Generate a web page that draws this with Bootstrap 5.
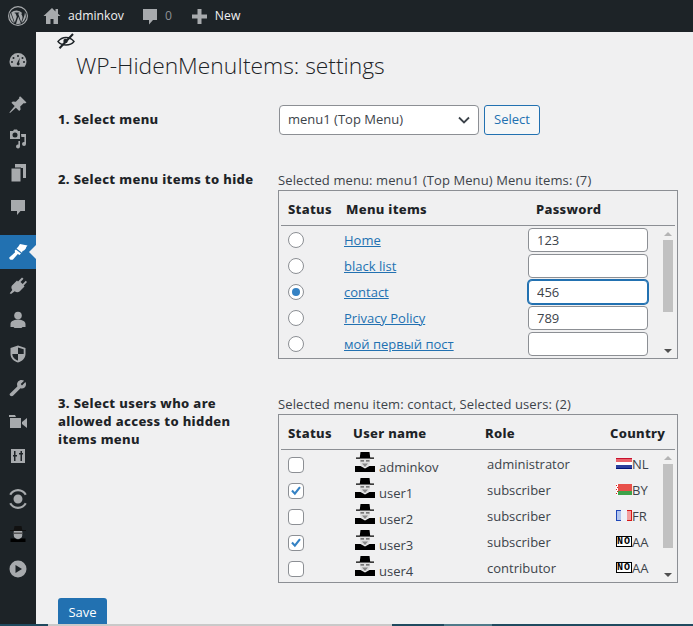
<!DOCTYPE html>
<html lang="en">
<head>
<meta charset="utf-8">
<title>WP-HidenMenuItems</title>
<link href="https://cdn.jsdelivr.net/npm/bootstrap@5.3.0/dist/css/bootstrap.min.css" rel="stylesheet">
<style>
html,body{height:626px;overflow:hidden}
body{background:#f0f0f1;font-family:"Open Sans","Liberation Sans",sans-serif;font-size:13px;color:#3c434a;width:693px}
.wbar{height:32px;background:#1d2327;color:#f0f0f1;flex:none;font-size:12.2px}
.wbar svg{fill:#a7aaad;display:block}
.wbar .muted-num{color:#8c8f94}
.wshell{height:592px;overflow:hidden}
.wside{width:36px;background:#1d2327;flex:none;padding-top:11px}
.wside .ico{height:34px;display:flex;align-items:center;justify-content:center;position:relative}
.wside .ico svg{width:20px;height:20px;fill:#a7aaad;display:block}
.wside .sep{height:11px}
.wside .sep2{height:9px}
.wside .sep3{height:1px}
.wside .act{background:#2271b1}
.wside .act svg{fill:#fff}
.wside .act::after{content:"";position:absolute;right:0;top:10px;border:7px solid transparent;border-right-color:#f0f0f1;border-left:0}
.wmain{padding-left:22px;flex:1;min-width:0}
.eyeico{display:block;width:18px;height:16px;margin-top:1px;margin-left:-1px}
.wtitle{font-size:22.8px;font-weight:300;color:#1d2327;margin:2px 0 0 18px;line-height:30px}
.lblcol{width:220px;flex:none;font-family:"Noto Sans","Open Sans",sans-serif;font-weight:800;color:#1d2327;line-height:18px;padding-right:20px;letter-spacing:.35px}
.lblup{margin-bottom:2px}
.pick{width:200px;height:30px;border:1px solid #8c8f94;border-radius:4px;background:#fff;color:#3c434a;padding:0 8px;display:flex;align-items:center;justify-content:space-between;margin-left:1px}
.selbtn{height:30px;width:56px;padding:0;font-size:13px;color:#2271b1;border:1px solid #2271b1;background:#f6f7f7;border-radius:3px;margin-left:5px}
.capt{line-height:20px;margin-bottom:0;white-space:nowrap;letter-spacing:.1px}
.tbox{width:400px;border:1px solid #8c8f94;padding:0 2px;position:relative;height:169px;overflow:hidden}
.ttab{table-layout:fixed;width:394px;border-collapse:collapse}
.ttab th{height:34px;color:#1d2327;font-family:"Noto Sans","Open Sans",sans-serif;font-weight:800;border-bottom:1px solid #8c8f94;padding:4px 0 0;white-space:nowrap;vertical-align:middle;letter-spacing:.3px}
.ttab td{height:26px;padding:0;vertical-align:middle;white-space:nowrap}
.ttab tbody tr:first-child td{padding-top:2px;height:28px}
.ttab td.txc{padding-top:1px}
.ttab tbody tr:first-child td.txc{padding-top:2px}
.cbx{width:16px;height:16px;border:1px solid #8c8f94;background:#fff;margin:0 0 0 7px;display:block;appearance:none;-webkit-appearance:none;position:relative}
.cbx.rd{border-radius:50%}
.cbx.sq{border-radius:4px;margin-top:2px}
.cbx.rd:checked::before{content:"";position:absolute;left:3px;top:3px;width:8px;height:8px;border-radius:50%;background:#3582c4}
.cbx.sq:checked{background:#fff url("data:image/svg+xml,%3Csvg xmlns='http://www.w3.org/2000/svg' viewBox='0 0 16 16'%3E%3Cpath d='M2.5 8.2l1.8-1.7 2.3 2.6 5-6.3 1.9 1.4-6.7 8.6z' fill='%233582c4'/%3E%3C/svg%3E") center/14px no-repeat}
.ttab a{color:#2271b1}
.hoff{padding-left:7px!important}
.pw{width:120px;height:24px;border:1px solid #8c8f94;border-radius:4px;background:#fff;color:#3c434a;padding:0 8px;font-size:13px;display:block;outline:0}
.pw.foc{border-color:#2271b1;box-shadow:0 0 0 1px #2271b1}
.sbar{position:absolute;right:2px;width:15px;background:#f1f1f1}
.sbar .thumb{position:absolute;left:3px;width:10px;background:#c1c1c1}
.sbar .up,.sbar .dn{position:absolute;left:4px;width:0;height:0;border-left:4px solid transparent;border-right:4px solid transparent}
.sbar .up{top:5px;border-bottom:4px solid #b4b4b4}
.sbar .dn{bottom:5px;border-top:4px solid #505050}
.avat{width:20px;height:20px;display:block;flex:none}
.uwrap{padding-left:2px;margin-top:-5px}
.uname{margin-left:4px;align-self:flex-end;line-height:13px;margin-bottom:-2px}
.rolec{padding-left:2px!important}
.flg{width:16px;height:11px;display:block;flex:none;margin-top:-2px}
.cflag{padding-left:6px}
.noflg{width:16px;height:11px;flex:none;border:1px solid #000;background:#fff;color:#000;font:700 10px/9px "Liberation Mono",monospace;text-align:center;letter-spacing:1px;overflow:hidden;margin-top:-2px}
.savebtn{width:49px;height:26px;background:#2271b1;color:#fff;border:0;border-radius:3px 3px 0 0;padding:4px 0 0;font-size:13px;display:block;margin-top:15px}
.wstrip{height:2px;flex:none}
.wstrip i{display:block;height:2px}
.s1{width:48px;background:#1f4a5f}.s2{width:344px;background:#c9c9c9}.s3{width:52px;background:#1f4a5f}.s4{width:48px;background:#4f7a8a}.s5{flex:1;background:#1f4a5f}
</style>
</head>
<body class="d-flex flex-column">
<div class="wbar d-flex align-items-center">
  <svg width="20" height="20" viewBox="0 0 20 20" style="margin-left:8px"><path fill-rule="evenodd" d="M10 0a10 10 0 1 0 0 20 10 10 0 0 0 0-20zm0 1.2a8.8 8.8 0 1 1 0 17.6 8.8 8.8 0 0 1 0-17.6zM3.2 6.6l3.6 10.1 2-5.9-1.2-3.4-1-.1v-.9h4.600v.9l-1 .1 3 8.900 1-3c.6-1.900.4-3.300-.5-4.500-.5-.7-.3-1.700.5-1.900A8 8 0 0 0 3.200 6.600zM2 10c0 3 1.700 5.600 4.200 6.900L2.500 6.800A8 8 0 0 0 2 10zm8.300.8L8 17.700a8 8 0 0 0 4.900-.1zM16.800 5.900c.2 1.800-.1 3-1.200 6l-2 5A8 8 0 0 0 16.800 5.900z"/></svg>
  <svg width="18" height="18" viewBox="0 0 18 18" style="margin-left:15px"><path d="M9 1L0.500 9h2.500v8h4.500v-5h3v5H15V9h2.500L15 6.700V2h-2.500v2.400z"/></svg>
  <span style="margin-left:7px">adminkov</span>
  <svg width="16" height="17" viewBox="0 0 16 17" style="margin-left:18px"><path d="M1 1h14v11h-4l-4 4.500V12H1z"/></svg>
  <span class="muted-num" style="margin-left:7px">0</span>
  <svg width="15" height="15" viewBox="0 0 15 15" style="margin-left:20px"><path d="M5.500 0h4v5.500H15v4H9.500V15h-4V9.500H0v-4h5.500z"/></svg>
  <span style="margin-left:8px">New</span>
</div>
<div class="wshell d-flex flex-grow-1">
  <nav class="wside">
    <div class="ico"><svg viewBox="0 0 20 20"><path fill-rule="evenodd" d="M10 3a8.500 8.500 0 0 0-8.500 8.500c0 2 .7 3.800 1.800 5.200h13.400a8.400 8.400 0 0 0 1.800-5.200A8.500 8.500 0 0 0 10 3zM10 5a1 1 0 1 1 0 2 1 1 0 0 1 0-2zM5.500 7a1 1 0 1 1 0 2 1 1 0 0 1 0-2zm9 0a1 1 0 1 1 0 2 1 1 0 0 1 0-2zM4 11a1 1 0 1 1 0 2 1 1 0 0 1 0-2zm12 0a1 1 0 1 1 0 2 1 1 0 0 1 0-2zM11.800 7.800l-.7 4.900a1.500 1.500 0 1 1-2 .2z"/></svg></div>
    <div class="sep"></div>
    <div class="ico"><svg viewBox="0 0 20 20"><path d="M12.500 1.500l6 6-1.600 1-1-.6-3.700 3.700.4 3-1.400 1.400-3.300-3.300L2 18l-.6-.6 5.300-6.300-3.300-3.300L4.800 6.400l3 .4 3.700-3.700-.6-1z"/></svg></div>
    <div class="ico"><svg viewBox="0 0 20 20"><path fill-rule="evenodd" d="M2 2h3l1-1.500h3L10 2h2v8H2zM7 3.500a2.500 2.500 0 1 0 0 5 2.500 2.500 0 0 0 0-5zM13 5h5v10a2 2 0 1 1-1.600-2V8h-3zM12 12v5.500a2 2 0 1 1-1.600-2V12z"/></svg></div>
    <div class="ico"><svg viewBox="0 0 20 20"><path d="M7 1h11v14h-3V5H7z"/><path d="M3 5h10v14H3z" stroke="#1d2327" stroke-width="1"/></svg></div>
    <div class="ico"><svg viewBox="0 0 20 20"><path d="M3 3h14v11h-4.500l-3.500 4v-4H3z"/></svg></div>
    <div class="sep"></div>
    <div class="ico act"><svg viewBox="0 0 20 20"><path d="M12 2l7.500 1.500-1.200 1.500-.6 1.800L16 8.500 14.500 9l-.5 1.800L8.500 6.500 10 5z"/><path d="M7.800 7.400l5.200 4.200-1.500 1.500-1.700-1-4.800 5.300c-1.100 1-4 .2-3.700-1.800l5.800-5.300-.5-1.600z"/></svg></div>
    <div class="ico"><svg viewBox="0 0 20 20"><path d="M14 1.500l1.500 1.300-3 3.200 2.200 2 3-3.200 1.300 1.300-3.300 3.500.8 1-5 5c-1.500 1-3.500.7-4.800-.4L3 18l-1.300-.8 2.600-3.300C3.300 12.500 3 10.800 4 9.500l5-5 1 .9z"/></svg></div>
    <div class="ico"><svg viewBox="0 0 20 20"><circle cx="10" cy="5.500" r="3.800"/><path d="M10 9.500c2 0 7.500 1 7.500 4.500v3h-3l-1 1h-7l-1-1h-3v-3c0-3.500 5.500-4.500 7.500-4.500z"/></svg></div>
    <div class="ico"><svg viewBox="0 0 20 20"><path fill-rule="evenodd" d="M10 1.500L17.500 4v6c0 4-3.500 7.500-7.500 8.500C6 17.500 2.500 14 2.500 10V4zM10 3.500V10H4.300c.1 3 2.700 5.700 5.700 6.600V10h5.700V5.300z"/></svg></div>
    <div class="ico"><svg viewBox="0 0 20 20"><path d="M13.500 2c1 0 1.900.2 2.600.7L12.700 6l1.300 1.400 3.400-3.400c.5.800.7 1.700.6 2.700-.2 2.300-2.400 4-4.700 3.700l-.8-.2-7.500 7.600c-1 1-3.500.2-3.400-1.800l7.700-7.500-.1-.9C8.500 4.300 10.800 2 13.500 2z"/></svg></div>
    <div class="ico"><svg viewBox="0 0 20 20"><path d="M1 3h6l1 2H1z"/><path d="M2 6h11v10H2z"/><path d="M14 10l5-4v10l-5-4z"/></svg></div>
    <div class="ico"><svg viewBox="0 0 20 20"><path fill-rule="evenodd" d="M3 3h14v14H3zM6 5v4H5v1.500h1V15h1.500v-4.500H9V9H7.500V5zM12.500 5v2H11v1.500h1.500V15H14V8.500h1V7h-1V5z"/></svg></div>
    <div class="sep2"></div>
    <div class="ico"><svg viewBox="0 0 20 20"><path fill-rule="evenodd" d="M10 5.500c2.500 0 4.500 2 4.500 4.500S12.500 14.500 10 14.500 5.500 12.500 5.500 10 7.500 5.500 10 5.500zM10 0c3.800 0 7 2.100 8.700 5.200L16.800 6.300A7.800 7.800 0 0 0 10 2.200 7.800 7.800 0 0 0 3.200 6.300L1.300 5.200C3 2.100 6.200 0 10 0zM1.300 14.800l1.900-1.100A7.800 7.800 0 0 0 10 17.800a7.800 7.800 0 0 0 6.800-4.100l1.900 1.100C17 17.900 13.800 20 10 20s-7-2.100-8.700-5.200z"/></svg></div>
    <div class="sep3"></div>
    <div class="ico"><svg viewBox="0 0 20 20"><path d="M6.500 2h7l.7 4H18v1H2V6h3.800z" fill="#111"/><path d="M5.800 7h8.400v4.500c0 2-1.800 3.500-4.200 3.500s-4.200-1.500-4.200-3.500z"/><path d="M5.500 8.500h9v1.500h-9z" fill="#555"/><path d="M2.500 14.500h4.500l3 1.500 3-1.500h4.500V18h-15z" fill="#000"/></svg></div>
    <div class="sep3"></div>
    <div class="ico"><svg viewBox="0 0 20 20"><path fill-rule="evenodd" d="M10 1.500a8.500 8.500 0 1 0 0 17 8.500 8.500 0 0 0 0-17zM7.500 6l6.500 4-6.500 4z"/></svg></div>
  </nav>
  <main class="wmain">
    <svg class="eyeico" viewBox="0 0 18 16"><path d="M1 8.500C3 6 5.800 4.500 9 4.500s6 1.500 8 4c-2 2.500-4.800 3.500-8 3.500S3 11 1 8.500z" fill="none" stroke="#1d2327" stroke-width="1.400"/><circle cx="8.500" cy="8" r="2.200" fill="#1d2327"/><path d="M2.500 15.300L16 1" stroke="#1d2327" stroke-width="2"/></svg>
    <h1 class="wtitle">WP-HidenMenuItems: settings</h1>

    <div class="d-flex align-items-center" style="margin-top:24px">
      <div class="lblcol lblup">1. Select menu</div>
      <div class="pick"><span>menu1 (Top Menu)</span><svg width="12" height="8" viewBox="0 0 12 8"><path d="M1 1.500l5 5 5-5" fill="none" stroke="#3c434a" stroke-width="1.800"/></svg></div>
      <button class="selbtn" type="button">Select</button>
    </div>

    <div class="d-flex" style="margin-top:35px">
      <div class="lblcol">2. Select menu items to hide</div>
      <div>
        <p class="capt">Selected menu: menu1 (Top Menu) Menu items: (7)</p>
        <div class="tbox">
          <table class="ttab">
            <colgroup><col style="width:63px"><col style="width:184px"><col style="width:132px"><col style="width:15px"></colgroup>
            <thead><tr><th class="hoff">Status</th><th style="padding-left:2px">Menu items</th><th style="padding-left:8px">Password</th><th></th></tr></thead>
            <tbody>
              <tr><td><input class="cbx rd" type="radio" name="m"></td><td class="txc"><a href="#">Home</a></td><td><input class="pw" value="123"></td><td></td></tr>
              <tr><td><input class="cbx rd" type="radio" name="m"></td><td class="txc"><a href="#">black list</a></td><td><input class="pw" value=""></td><td></td></tr>
              <tr><td><input class="cbx rd" type="radio" name="m" checked></td><td class="txc"><a href="#">contact</a></td><td><input class="pw foc" value="456"></td><td></td></tr>
              <tr><td><input class="cbx rd" type="radio" name="m"></td><td class="txc"><a href="#">Privacy Policy</a></td><td><input class="pw" value="789"></td><td></td></tr>
              <tr><td><input class="cbx rd" type="radio" name="m"></td><td class="txc"><a href="#">мой первый пост</a></td><td><input class="pw" value=""></td><td></td></tr>
            </tbody>
          </table>
          <div class="sbar" style="top:36px;bottom:0"><span class="up"></span><span class="thumb" style="top:13px;height:72px"></span><span class="dn"></span></div>
        </div>
      </div>
    </div>

    <div class="d-flex" style="margin-top:35px">
      <div class="lblcol">3. Select users who are allowed access to hidden items menu</div>
      <div>
        <p class="capt">Selected menu item: contact, Selected users: (2)</p>
        <div class="tbox">
          <svg width="0" height="0" class="position-absolute"><defs>
            <symbol id="spy" viewBox="0 0 20 20"><path d="M5.500 0h9l.7 5.500H19v1.200H1V5.500h3.800z" fill="#000"/><path d="M5 6.700h10V10c0 3-2 5-5 5s-5-2-5-5z" fill="#ddd"/><path d="M5.500 8.200h3.500v1.300H5.500zM11 8.200h3.500v1.300H11z" fill="#555"/><path d="M7 11.500h6L10 15z" fill="#888"/><path d="M0 14h5.500L10 16.500l4.500-2.500H20v6H0z" fill="#000"/></symbol>
            <symbol id="nl" viewBox="0 0 16 11"><rect width="16" height="11" fill="#fff"/><rect width="16" height="4" fill="#e8636b"/><rect y="7" width="16" height="4" fill="#2b3f9e"/><rect y="0" width="16" height="1" fill="#c8102e"/><rect y="10" width="16" height="1" fill="#00147a"/></symbol>
            <symbol id="by" viewBox="0 0 16 11"><rect width="16" height="7" fill="#e8504a"/><rect y="7" width="16" height="4" fill="#3ea24a"/><rect width="2" height="11" fill="#fff"/><path d="M0 1h1v1H0zM1 3h1v1H1zM0 5h1v1H0zM1 7h1v1H1zM0 9h1v1H0z" fill="#d22"/></symbol>
            <symbol id="fr" viewBox="0 0 16 11"><rect width="16" height="11" fill="#eef1f8"/><rect width="5" height="11" fill="#b4c6ee"/><rect width="1" height="11" fill="#1f47b8"/><rect width="5" height="1" fill="#1f47b8"/><rect y="10" width="5" height="1" fill="#1f47b8"/><rect x="11" width="5" height="11" fill="#f2a0a0"/><rect x="15" width="1" height="11" fill="#d81818"/><rect x="11" width="5" height="1" fill="#d81818"/><rect x="11" y="10" width="5" height="1" fill="#d81818"/></symbol>
          </defs></svg>
          <table class="ttab">
            <colgroup><col style="width:72px"><col style="width:132px"><col style="width:125px"><col style="width:65px"></colgroup>
            <thead><tr><th class="hoff">Status</th><th>User name</th><th>Role</th><th>Country</th></tr></thead>
            <tbody>
              <tr><td><input class="cbx sq" type="checkbox"></td><td><div class="d-flex uwrap"><svg class="avat"><use href="#spy"/></svg><span class="uname">adminkov</span></div></td><td class="rolec txc">administrator</td><td class="txc"><div class="d-flex align-items-center cflag"><svg class="flg"><use href="#nl"/></svg>NL</div></td></tr>
              <tr><td><input class="cbx sq" type="checkbox" checked></td><td><div class="d-flex uwrap"><svg class="avat"><use href="#spy"/></svg><span class="uname">user1</span></div></td><td class="rolec txc">subscriber</td><td class="txc"><div class="d-flex align-items-center cflag"><svg class="flg"><use href="#by"/></svg>BY</div></td></tr>
              <tr><td><input class="cbx sq" type="checkbox"></td><td><div class="d-flex uwrap"><svg class="avat"><use href="#spy"/></svg><span class="uname">user2</span></div></td><td class="rolec txc">subscriber</td><td class="txc"><div class="d-flex align-items-center cflag"><svg class="flg"><use href="#fr"/></svg>FR</div></td></tr>
              <tr><td><input class="cbx sq" type="checkbox" checked></td><td><div class="d-flex uwrap"><svg class="avat"><use href="#spy"/></svg><span class="uname">user3</span></div></td><td class="rolec txc">subscriber</td><td class="txc"><div class="d-flex align-items-center cflag"><span class="noflg">NO</span>AA</div></td></tr>
              <tr><td><input class="cbx sq" type="checkbox"></td><td><div class="d-flex uwrap"><svg class="avat"><use href="#spy"/></svg><span class="uname">user4</span></div></td><td class="rolec txc">contributor</td><td class="txc"><div class="d-flex align-items-center cflag"><span class="noflg">NO</span>AA</div></td></tr>
            </tbody>
          </table>
          <div class="sbar" style="top:36px;bottom:0"><span class="up"></span><span class="thumb" style="top:13px;height:84px"></span><span class="dn"></span></div>
        </div>
      </div>
    </div>
    <button class="savebtn" type="button">Save</button>
  </main>
</div>
<div class="wstrip d-flex"><i class="s1"></i><i class="s2"></i><i class="s3"></i><i class="s4"></i><i class="s5"></i></div>
</body>
</html>
